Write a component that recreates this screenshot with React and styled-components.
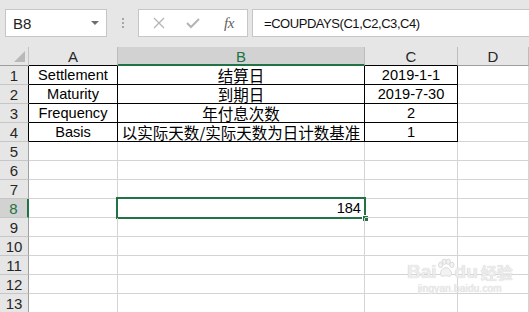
import React from 'react'
import styled, { createGlobalStyle } from 'styled-components'

const GlobalStyle = createGlobalStyle`
  html, body {
    margin: 0;
    padding: 0;
    background: #e6e6e6;
    overflow: hidden;
  }
  body {
    font-family: "Liberation Sans", "Noto Sans CJK SC", sans-serif;
  }
`

const GREEN = '#217346'

const Page = styled.div`
  width: 529px;
  height: 312px;
  overflow: hidden;
  position: relative;
  background: #e6e6e6;
`

const Toolbar = styled.div`
  height: 47px;
  box-sizing: border-box;
  padding: 9px 0 0 5px;
  display: flex;
  align-items: flex-start;
`

const Box = styled.div`
  box-sizing: border-box;
  height: 28px;
  background: #fff;
  border: 1px solid #c6c6c6;
  display: flex;
  align-items: center;
`

const NameBox = styled(Box)`
  width: 102px;
  padding: 0 0 0 7px;
  justify-content: space-between;
  font-size: 15px;
  color: #222;
`

const Caret = styled.span`
  width: 0;
  height: 0;
  margin-right: 7px;
  border-left: 4px solid transparent;
  border-right: 4px solid transparent;
  border-top: 4px solid #6e6e6e;
`

const Grip = styled.div`
  width: 31px;
  height: 28px;
  display: flex;
  flex-direction: column;
  align-items: center;
  justify-content: center;
  gap: 2px;

  span {
    width: 2px;
    height: 2px;
    background: #a6a6a6;
  }
`

const ButtonBox = styled(Box)`
  width: 110px;
  padding: 0 0 0 12px;
`

const ToolButton = styled.span`
  width: ${p => p.w}px;
  display: flex;
  justify-content: center;
  align-items: center;
`

const Fx = styled.span`
  font-family: "Liberation Serif", serif;
  font-style: italic;
  font-size: 15px;
  color: #5f5f5f;
  letter-spacing: -0.5px;
`

const FormulaBox = styled(Box)`
  flex: 1;
  margin-left: 4px;
  border-right: none;
  padding-left: 11px;
  font-size: 13px;
  letter-spacing: -0.45px;
  color: #111;
`

const Sheet = styled.div`
  display: grid;
  grid-template-columns: 29px 89px 247px 93px 1fr;
  grid-auto-rows: 19px;
  background: #fff;
`

const Cell = styled.div`
  box-sizing: border-box;
  position: relative;
  border-right: 1px solid ${p => p.rc || '#d4d4d4'};
  border-bottom: 1px solid ${p => p.bc || '#d4d4d4'};
  display: flex;
  align-items: center;
  justify-content: ${p => p.align || 'center'};
  padding: 1px 3px 0;
  line-height: 1;
  font-size: ${p => (p.cjk ? '15.5px' : '14.6px')};
  font-family: ${p =>
    p.cjk
      ? '"Noto Sans CJK SC", sans-serif'
      : '"Liberation Sans", "Noto Sans CJK SC", sans-serif'};
  color: #000;
  white-space: nowrap;
`

const Num = styled.span`
  font-family: "Liberation Sans", sans-serif;
  font-size: 14.6px;
`

const ColHead = styled.div`
  box-sizing: border-box;
  background: ${p => (p.active ? '#d2d2d2' : '#e6e6e6')};
  border-right: 1px solid #bdbdbd;
  border-bottom: ${p =>
    p.active ? `2px solid ${GREEN}` : `1px solid ${p.edge || '#9e9e9e'}`};
  display: flex;
  align-items: center;
  justify-content: center;
  font-size: 15px;
  line-height: 1;
  color: ${p => (p.active ? GREEN : '#262626')};
  padding-top: 1px;
`

const Corner = styled(ColHead)`
  position: relative;
  border-right-color: #c4c4c4;

  &::after {
    content: '';
    position: absolute;
    right: 3px;
    bottom: 3px;
    border-left: 11px solid transparent;
    border-bottom: 11px solid #b9b9b9;
  }
`

const RowHead = styled.div`
  box-sizing: border-box;
  background: ${p => (p.active ? '#d2d2d2' : '#e6e6e6')};
  border-bottom: 1px solid #c6c6c6;
  border-right: ${p =>
    p.active ? `2px solid ${GREEN}` : `1px solid ${p.edge || '#9e9e9e'}`};
  display: flex;
  align-items: center;
  justify-content: center;
  font-size: 15px;
  line-height: 1;
  color: ${p => (p.active ? GREEN : '#262626')};
  padding-top: 1px;
`

const Selection = styled.div`
  position: absolute;
  left: -2px;
  top: -2px;
  right: -2px;
  bottom: -2px;
  border: 2px solid ${GREEN};
  pointer-events: none;
`

const Handle = styled.span`
  position: absolute;
  right: -5px;
  bottom: -5px;
  width: 5px;
  height: 5px;
  background: ${GREEN};
  border: 1px solid #fff;
`

const Watermark = styled.div`
  position: absolute;
  left: 407px;
  top: 258px;
  display: flex;
  flex-direction: column;
  align-items: center;
  color: #ececec;
  pointer-events: none;
  text-shadow: 0 0 1px #c4c4c4;
`

const MarkTop = styled.div`
  display: flex;
  align-items: flex-end;
  font-family: "Liberation Sans", sans-serif;
  font-weight: bold;
  font-size: 19px;
  line-height: 19px;
`

const MarkCn = styled.span`
  margin-left: 3px;
  font-size: 16px;
  font-family: "Noto Sans CJK SC", sans-serif;
  line-height: 18px;
`

const MarkUrl = styled.div`
  font-family: "Liberation Sans", sans-serif;
  font-size: 10px;
  line-height: 12px;
  margin-top: 2px;
  letter-spacing: 0.2px;
`

const Paw = () => (
  <svg width="18" height="21" viewBox="0 0 20 22" style={{ margin: '0 0 2px' }}>
    <g fill="#f2f2f2" stroke="#cfcfcf" strokeWidth="0.8">
      <ellipse cx="4" cy="7" rx="2.4" ry="3" />
      <ellipse cx="8" cy="3.5" rx="2.4" ry="3" />
      <ellipse cx="12.5" cy="3.5" rx="2.4" ry="3" />
      <ellipse cx="16.5" cy="7" rx="2.4" ry="3" />
      <path d="M10 10 C6 10 3 15 4 18 C5 21 8 19 10 19 C12 19 15 21 16 18 C17 15 14 10 10 10 Z" />
    </g>
  </svg>
)

const table = [
  ['Settlement', '结算日', '2019-1-1'],
  ['Maturity', '到期日', '2019-7-30'],
  ['Frequency', '年付息次数', '2'],
  ['Basis', '以实际天数/实际天数为日计数基准', '1'],
]

const App = () => {
  const rows = []
  for (let r = 1; r <= 13; r++) {
    const inTable = r <= 4
    const data = inTable ? table[r - 1] : null
    const line = inTable ? '#000' : undefined
    rows.push(
      <RowHead key={`h${r}`} active={r === 8} edge={line}>
        {r}
      </RowHead>
    )
    rows.push(
      <Cell key={`a${r}`} rc={line} bc={line}>
        {data && data[0]}
      </Cell>
    )
    rows.push(
      <Cell key={`b${r}`} cjk rc={line} bc={line} align={r === 8 ? 'flex-end' : 'center'}>
        {data && data[1]}
        {r === 8 && (
          <>
            <Num>184</Num>
            <Selection>
              <Handle />
            </Selection>
          </>
        )}
      </Cell>
    )
    rows.push(
      <Cell key={`c${r}`} rc={line} bc={line}>
        {data && data[2]}
      </Cell>
    )
    rows.push(<Cell key={`d${r}`} />)
  }

  return (
    <Page>
      <GlobalStyle />
      <Toolbar>
        <NameBox>
          B8
          <Caret />
        </NameBox>
        <Grip>
          <span />
          <span />
          <span />
        </Grip>
        <ButtonBox>
          <ToolButton w={16}>
            <svg width="12" height="12" viewBox="0 0 12 12">
              <path d="M1 1 L11 11 M11 1 L1 11" stroke="#b4b4b4" strokeWidth="1.3" />
            </svg>
          </ToolButton>
          <ToolButton w={51}>
            <svg width="14" height="12" viewBox="0 0 14 12">
              <path d="M1 6 L5 10 L13 2" fill="none" stroke="#b4b4b4" strokeWidth="2" />
            </svg>
          </ToolButton>
          <ToolButton w={22}>
            <Fx>fx</Fx>
          </ToolButton>
        </ButtonBox>
        <FormulaBox>=COUPDAYS(C1,C2,C3,C4)</FormulaBox>
      </Toolbar>
      <Sheet>
        <Corner />
        <ColHead edge="#000">A</ColHead>
        <ColHead active>B</ColHead>
        <ColHead edge="#000">C</ColHead>
        <ColHead>D</ColHead>
        {rows}
      </Sheet>
      <Watermark>
        <MarkTop>
          Bai
          <Paw />
          du
          <MarkCn>经验</MarkCn>
        </MarkTop>
        <MarkUrl>jingyan.baidu.com</MarkUrl>
      </Watermark>
    </Page>
  )
}

export default App
